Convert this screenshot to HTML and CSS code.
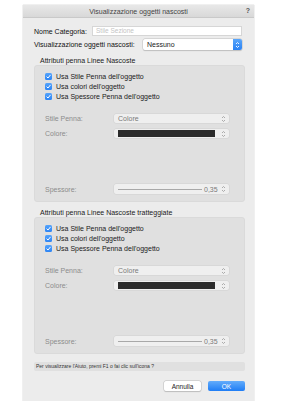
FILE: index.html
```html
<!DOCTYPE html>
<html lang="it">
<head>
    <meta charset="UTF-8">
    <title>Visualizzazione oggetti nascosti</title>
    <link rel="stylesheet" href="styles.css">
</head>
<body>

    <div class="dialog">
        <div class="titlebar">
            <span class="title">Visualizzazione oggetti nascosti</span>
            <span class="help">?</span>
        </div>

        <div class="body">
            <div class="field-row">
                <span class="field-label">Nome Categoria:</span>
                <div class="text-input">Stile Sezione</div>
            </div>
            <div class="field-row second">
                <span class="field-label">Visualizzazione oggetti nascosti:</span>
                <div class="popup">
                    <span>Nessuno</span>
                    <span class="popup-arrows">
                        <svg width="5" height="8" viewBox="0 0 5 8"><path d="M1 3 L2.5 1.5 L4 3 M1 5 L2.5 6.5 L4 5" fill="none" stroke="#fff" stroke-width="0.9"/></svg>
                    </span>
                </div>
            </div>

            <!-- gruppo 1 -->
            <div class="group-title">Attributi penna Linee Nascoste</div>
            <div class="group">
                <div class="check"><span class="box"><svg width="7" height="7" viewBox="0 0 7 7"><path d="M1.6 3.6 L3 5 L5.5 1.9" fill="none" stroke="#fff" stroke-width="1"/></svg></span>Usa Stile Penna dell'oggetto</div>
                <div class="check"><span class="box"><svg width="7" height="7" viewBox="0 0 7 7"><path d="M1.6 3.6 L3 5 L5.5 1.9" fill="none" stroke="#fff" stroke-width="1"/></svg></span>Usa colori dell'oggetto</div>
                <div class="check"><span class="box"><svg width="7" height="7" viewBox="0 0 7 7"><path d="M1.6 3.6 L3 5 L5.5 1.9" fill="none" stroke="#fff" stroke-width="1"/></svg></span>Usa Spessore Penna dell'oggetto</div>

                <div class="attr-grid">
                    <span class="attr-label">Stile Penna:</span>
                    <div class="attr-control"><span class="attr-value">Colore</span><svg class="stepper" width="5" height="8" viewBox="0 0 5 8"><path d="M1 3 L2.5 1.5 L4 3 M1 5 L2.5 6.5 L4 5" fill="none" stroke="#999" stroke-width="0.8"/></svg></div>
                    <span class="attr-label">Colore:</span>
                    <div class="attr-control"><span class="swatch"></span><svg class="stepper" width="5" height="8" viewBox="0 0 5 8"><path d="M1 3 L2.5 1.5 L4 3 M1 5 L2.5 6.5 L4 5" fill="none" stroke="#999" stroke-width="0.8"/></svg></div>
                </div>

                <div class="attr-grid thick">
                    <span class="attr-label">Spessore:</span>
                    <div class="attr-control"><span class="line"></span><span class="thick-value">0,35</span><svg class="stepper" width="5" height="8" viewBox="0 0 5 8"><path d="M1 3 L2.5 1.5 L4 3 M1 5 L2.5 6.5 L4 5" fill="none" stroke="#999" stroke-width="0.8"/></svg></div>
                </div>
            </div>

            <!-- gruppo 2 -->
            <div class="group-title">Attributi penna Linee Nascoste tratteggiate</div>
            <div class="group">
                <div class="check"><span class="box"><svg width="7" height="7" viewBox="0 0 7 7"><path d="M1.6 3.6 L3 5 L5.5 1.9" fill="none" stroke="#fff" stroke-width="1"/></svg></span>Usa Stile Penna dell'oggetto</div>
                <div class="check"><span class="box"><svg width="7" height="7" viewBox="0 0 7 7"><path d="M1.6 3.6 L3 5 L5.5 1.9" fill="none" stroke="#fff" stroke-width="1"/></svg></span>Usa colori dell'oggetto</div>
                <div class="check"><span class="box"><svg width="7" height="7" viewBox="0 0 7 7"><path d="M1.6 3.6 L3 5 L5.5 1.9" fill="none" stroke="#fff" stroke-width="1"/></svg></span>Usa Spessore Penna dell'oggetto</div>

                <div class="attr-grid">
                    <span class="attr-label">Stile Penna:</span>
                    <div class="attr-control"><span class="attr-value">Colore</span><svg class="stepper" width="5" height="8" viewBox="0 0 5 8"><path d="M1 3 L2.5 1.5 L4 3 M1 5 L2.5 6.5 L4 5" fill="none" stroke="#999" stroke-width="0.8"/></svg></div>
                    <span class="attr-label">Colore:</span>
                    <div class="attr-control"><span class="swatch"></span><svg class="stepper" width="5" height="8" viewBox="0 0 5 8"><path d="M1 3 L2.5 1.5 L4 3 M1 5 L2.5 6.5 L4 5" fill="none" stroke="#999" stroke-width="0.8"/></svg></div>
                </div>

                <div class="attr-grid thick">
                    <span class="attr-label">Spessore:</span>
                    <div class="attr-control"><span class="line"></span><span class="thick-value">0,35</span><svg class="stepper" width="5" height="8" viewBox="0 0 5 8"><path d="M1 3 L2.5 1.5 L4 3 M1 5 L2.5 6.5 L4 5" fill="none" stroke="#999" stroke-width="0.8"/></svg></div>
                </div>
            </div>

            <div class="help-bar">Per visualizzare l'Aiuto, premi F1 o fai clic sull'icona ?</div>

            <div class="buttons">
                <button class="button cancel">Annulla</button>
                <button class="button ok">OK</button>
            </div>
        </div>
    </div>

</body>
</html>
```

FILE: styles.css
```css
body {
    margin: 0;
    background-color: #fff;
    font-family: 'Liberation Sans', Arial, sans-serif;
    font-size: 7px;
    color: #1a1a1a;
}
.dialog {
    margin: 5px 0 0 23px;
    width: 231px;
    height: 396px;
    background-color: #ececec;
    box-shadow: 0 0 1px rgba(0, 0, 0, 0.35);
    display: flex;
    flex-direction: column;
}
.titlebar {
    height: 13px;
    background: linear-gradient(#e8e8e8, #d8d8d8);
    border-bottom: 1px solid #c9c9c9;
    box-sizing: border-box;
    display: flex;
    align-items: center;
    justify-content: center;
    position: relative;
}
.title {
    color: #444;
}
.help {
    position: absolute;
    right: 4px;
    top: 2px;
    font-weight: bold;
    color: #555;
}
.body {
    padding: 8px 9px 0 11px;
    display: flex;
    flex-direction: column;
}
.field-row {
    display: flex;
    align-items: center;
    height: 10px;
    white-space: nowrap;
}
.field-row.second {
    margin-top: 3px;
    height: 11px;
}
.field-label {
    margin-right: 4px;
    color: #111;
}
.text-input {
    margin-left: auto;
    margin-right: 3px;
    width: 150px;
    height: 10px;
    box-sizing: border-box;
    background-color: #fff;
    border: 1px solid #d6d6d6;
    color: #c4c4c4;
    padding-left: 3px;
    line-height: 8px;
    font-size: 6.5px;
}
.popup {
    margin-left: auto;
    margin-right: 3px;
    width: 99px;
    height: 11px;
    box-sizing: border-box;
    background-color: #fff;
    border-radius: 2px;
    box-shadow: 0 0 0 0.5px #c4c4c4, 0 0.5px 1px rgba(0, 0, 0, 0.2);
    display: flex;
    align-items: center;
    padding-left: 4px;
    overflow: hidden;
}
.popup-arrows {
    margin-left: auto;
    width: 9px;
    height: 11px;
    background: linear-gradient(#5aa6fa, #2a82f4);
    display: flex;
    align-items: center;
    justify-content: center;
}
.group-title {
    margin-top: 7px;
    height: 8px;
    line-height: 8px;
    padding-left: 6px;
    white-space: nowrap;
}
.group {
    width: 211px;
    height: 137px;
    box-sizing: border-box;
    background-color: #e0e0e0;
    border: 1px solid #dadada;
    border-radius: 3px;
    padding: 5px 16px 0 10px;
}
.check {
    height: 10px;
    display: flex;
    align-items: center;
    white-space: nowrap;
}
.box {
    width: 7px;
    height: 7px;
    border-radius: 1.5px;
    background: linear-gradient(#55a3fa, #2c84f4);
    margin-right: 4px;
    display: flex;
    flex-shrink: 0;
}
.attr-grid {
    margin-top: 13px;
    display: grid;
    grid-template-columns: 69px 115px;
    row-gap: 6px;
    align-items: center;
}
.attr-grid.thick {
    margin-top: 46px;
}
.attr-grid.thick .attr-control {
    height: 10px;
}
.attr-label {
    color: #8c8c8c;
}
.attr-control {
    height: 9px;
    background-color: #efefef;
    border-radius: 2px;
    box-shadow: 0 0 0 0.5px #d0d0d0;
    display: flex;
    align-items: center;
    padding: 0 3px 0 4px;
}
.attr-value {
    color: #7a7a7a;
}
.swatch {
    width: 97px;
    height: 7px;
    background-color: #2b2b2b;
}
.line {
    width: 84px;
    height: 1px;
    background-color: #a8a8a8;
}
.thick-value {
    margin-left: 2px;
    color: #7a7a7a;
}
.stepper {
    margin-left: auto;
}
.help-bar {
    margin-top: 8px;
    width: 211px;
    height: 9px;
    box-sizing: border-box;
    background-color: #e0e0e0;
    border-radius: 2px;
    padding-left: 2px;
    font-size: 5px;
    line-height: 9px;
    color: #333;
    white-space: nowrap;
}
.buttons {
    margin-top: 10px;
    width: 211px;
    display: flex;
    justify-content: flex-end;
    gap: 7px;
}
.button {
    width: 37px;
    height: 10px;
    padding: 0;
    border: none;
    border-radius: 2px;
    font-family: 'Liberation Sans', Arial, sans-serif;
    font-size: 6.5px;
}
.cancel {
    background-color: #fff;
    box-shadow: 0 0 0 0.5px #c0c0c0, 0 0.5px 1px rgba(0, 0, 0, 0.2);
    color: #222;
}
.ok {
    background: linear-gradient(#63acfb, #1f7df5);
    color: #fff;
}
```
